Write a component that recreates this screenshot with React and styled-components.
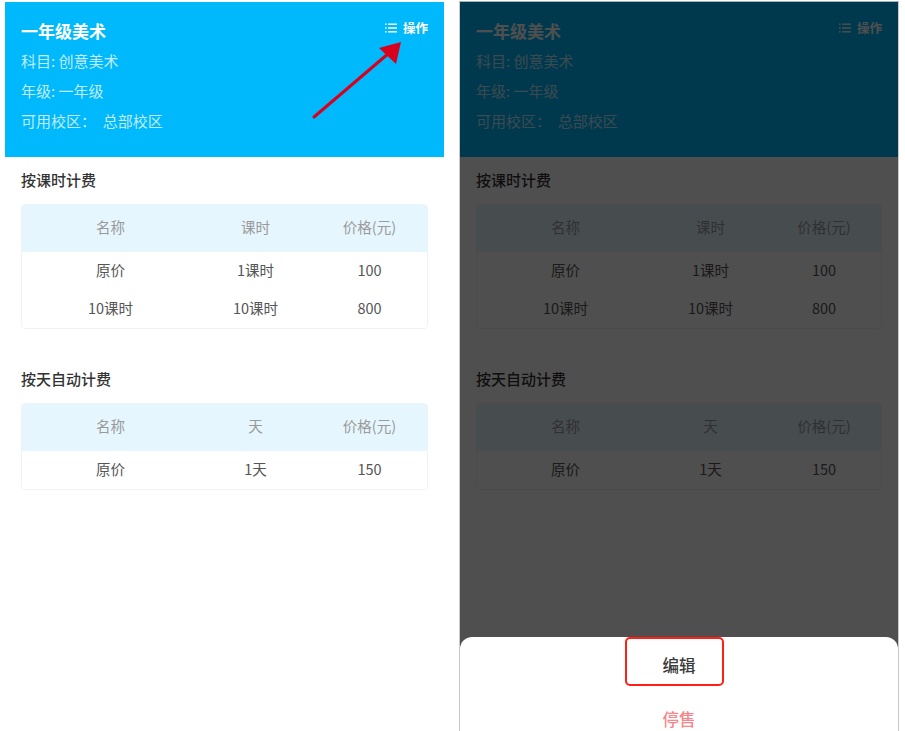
import React from 'react';
import styled, { createGlobalStyle } from 'styled-components';

const Global = createGlobalStyle`
  html, body { margin: 0; padding: 0; background: #fff; }
  body { font-family: "Noto Sans CJK SC", "Noto Sans", sans-serif; }
  * { box-sizing: border-box; }
`;

const Page = styled.div`
  width: 905px;
  height: 731px;
  overflow: hidden;
  display: flex;
  align-items: flex-start;
  gap: 15px;
  padding: 2px 0 0 5px;
  background: #fff;
`;

const Screen = styled.div`
  position: relative;
  width: ${(p) => (p.$framed ? '440px' : '439px')};
  height: 780px;
  background: #fff;
  border-left: ${(p) => (p.$framed ? '1px solid #c9c9c9' : 'none')};
  border-right: ${(p) => (p.$framed ? '1px solid #c9c9c9' : 'none')};
  margin-top: ${(p) => (p.$framed ? '-1px' : '0')};
  border-top: ${(p) => (p.$framed ? '1px solid #9fb4bb' : 'none')};
`;

const Header = styled.header`
  background: #00b9fc;
  height: 155px;
  padding: 17px 16px 0 16px;
  display: flex;
  justify-content: space-between;
  align-items: flex-start;
  color: #fff;
`;

const HeaderInfo = styled.div`
  display: flex;
  flex-direction: column;
`;

const Title = styled.div`
  font-size: 17px;
  font-weight: 700;
  line-height: 24px;
  margin-bottom: 3px;
`;

const InfoRow = styled.div`
  font-size: 15px;
  line-height: 30px;
  color: rgba(255, 255, 255, 0.76);
  white-space: pre;
`;

const OpButton = styled.div`
  display: flex;
  align-items: center;
  gap: 6px;
  font-size: 12.5px;
  font-weight: 700;
  line-height: 18px;
`;

const Body = styled.div`
  padding: 13px 16px 0 16px;
  display: flex;
  flex-direction: column;
`;

const Section = styled.section`
  display: flex;
  flex-direction: column;
  gap: 14px;
  & + & {
    margin-top: 40px;
  }
`;

const SectionTitle = styled.div`
  font-size: 15px;
  font-weight: 500;
  line-height: 20px;
  color: #333;
`;

const Card = styled.div`
  border: 1px solid #eef3f6;
  border-radius: 4px;
  overflow: hidden;
`;

const Row = styled.div`
  display: grid;
  grid-template-columns: 177px 113px 1fr;
  align-items: center;
  height: ${(p) => (p.$head ? '47px' : '38px')};
  padding-bottom: 3px;
  background: ${(p) => (p.$head ? '#e6f6fe' : '#fff')};
  color: ${(p) => (p.$head ? '#9a9a9a' : '#555')};
  font-size: 14.5px;
`;

const Cell = styled.div`
  text-align: center;
  line-height: 20px;
`;

const Overlay = styled.div`
  position: absolute;
  inset: 0;
  background: rgba(0, 0, 0, 0.69);
`;

const Sheet = styled.div`
  position: absolute;
  left: 0;
  right: 0;
  top: 635px;
  bottom: 0;
  background: #fff;
  border-radius: 12px 12px 0 0;
  display: flex;
  flex-direction: column;
  align-items: center;
`;

const SheetItem = styled.div`
  font-size: 16.5px;
  font-weight: 500;
  color: ${(p) => (p.$danger ? '#f7868a' : '#3a3a3a')};
  line-height: 22px;
  margin-top: ${(p) => (p.$danger ? '22px' : '0')};
`;

const Highlight = styled.div`
  width: 99px;
  height: 49px;
  margin-right: 10px;
  border: 2.5px solid #ff1f14;
  border-radius: 5px;
  display: flex;
  justify-content: center;
  align-items: center;
  padding: 7px 0 0 10px;
`;

const ArrowLayer = styled.svg`
  position: absolute;
  left: 0;
  top: 0;
  pointer-events: none;
`;

const ListIcon = () => (
  <svg width="12" height="10" viewBox="0 0 12 10" fill="none">
    <rect x="0" y="0.5" width="1.6" height="1.4" fill="#fff" />
    <rect x="0" y="4.3" width="1.6" height="1.4" fill="#fff" />
    <rect x="0" y="8.1" width="1.6" height="1.4" fill="#fff" />
    <rect x="3" y="0.5" width="9" height="1.4" fill="#fff" />
    <rect x="3" y="4.3" width="9" height="1.4" fill="#fff" />
    <rect x="3" y="8.1" width="9" height="1.4" fill="#fff" />
  </svg>
);

const hourly = {
  title: '按课时计费',
  head: ['名称', '课时', '价格(元)'],
  rows: [
    ['原价', '1课时', '100'],
    ['10课时', '10课时', '800'],
  ],
};

const daily = {
  title: '按天自动计费',
  head: ['名称', '天', '价格(元)'],
  rows: [['原价', '1天', '150']],
};

const PriceTable = ({ data }) => (
  <Section>
    <SectionTitle>{data.title}</SectionTitle>
    <Card>
      <Row $head>
        {data.head.map((h) => (
          <Cell key={h}>{h}</Cell>
        ))}
      </Row>
      {data.rows.map((r, i) => (
        <Row key={i}>
          {r.map((c, j) => (
            <Cell key={j}>{c}</Cell>
          ))}
        </Row>
      ))}
    </Card>
  </Section>
);

const CourseContent = () => (
  <>
    <Header>
      <HeaderInfo>
        <Title>一年级美术</Title>
        <InfoRow>科目: 创意美术</InfoRow>
        <InfoRow>年级: 一年级</InfoRow>
        <InfoRow>{'可用校区：  总部校区'}</InfoRow>
      </HeaderInfo>
      <OpButton>
        <ListIcon />
        操作
      </OpButton>
    </Header>
    <Body>
      <PriceTable data={hourly} />
      <PriceTable data={daily} />
    </Body>
  </>
);

export default function App() {
  return (
    <>
      <Global />
      <Page>
        <Screen>
          <CourseContent />
          <ArrowLayer width="439" height="157" viewBox="0 0 439 157">
            <line x1="309" y1="115" x2="384" y2="51" stroke="#d8001c" strokeWidth="3" strokeLinecap="round" />
            <polygon points="396,40 374,46 391,62" fill="#d8001c" />
          </ArrowLayer>
        </Screen>
        <Screen $framed>
          <CourseContent />
          <Overlay />
          <Sheet>
            <Highlight>
              <SheetItem>编辑</SheetItem>
            </Highlight>
            <SheetItem $danger>停售</SheetItem>
          </Sheet>
        </Screen>
      </Page>
    </>
  );
}
